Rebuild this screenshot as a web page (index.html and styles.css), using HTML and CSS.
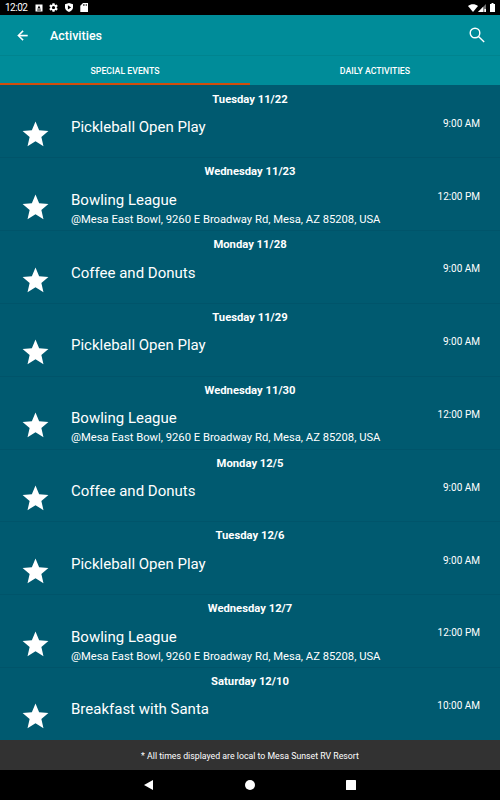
FILE: index.html
```html
<!DOCTYPE html>
<html lang="en">
<head>
  <meta charset="UTF-8">
  <meta name="viewport" content="width=device-width, initial-scale=1.0">
  <title>Activities</title>
  <link rel="stylesheet" href="styles.css">
</head>
<body>
<svg class="defs">
  <symbol id="star" viewBox="0 0 24 24">
    <path d="M12 17.27L18.18 21l-1.64-7.03L22 9.24l-7.19-.61L12 2 9.19 8.63 2 9.24l5.46 4.73L5.82 21z"/>
  </symbol>
</svg>

<!-- Status bar -->
<div class="status-bar">
  <span class="clock">12:02</span>
  <svg class="status-icon" viewBox="0 0 8 8"><path fill-rule="evenodd" d="M.5.5h7v7h-7zM4 1.500L2.400 4.600h3.200zM2.200 5.500v.9h3.600v-.9z"/></svg>
  <svg class="status-icon gear" viewBox="2 2 20 20"><path d="M19.14 12.94c.04-.3.06-.61.06-.94 0-.32-.02-.64-.07-.94l2.03-1.58c.18-.14.23-.41.12-.61l-1.92-3.32c-.12-.22-.37-.29-.59-.22l-2.39.96c-.5-.38-1.03-.7-1.62-.94l-.36-2.54c-.04-.24-.24-.41-.48-.41h-3.84c-.24 0-.43.17-.47.41l-.36 2.54c-.59.24-1.13.57-1.62.94l-2.39-.96c-.22-.08-.47 0-.59.22L2.74 8.87c-.12.21-.08.47.12.61l2.03 1.58c-.05.3-.09.63-.09.94s.02.64.07.94l-2.03 1.58c-.18.14-.23.41-.12.61l1.92 3.32c.12.22.37.29.59.22l2.39-.96c.5.38 1.03.7 1.62.94l.36 2.54c.05.24.24.41.48.41h3.84c.24 0 .44-.17.47-.41l.36-2.54c.59-.24 1.13-.56 1.62-.94l2.39.96c.22.08.47 0 .59-.22l1.92-3.32c.12-.22.07-.47-.12-.61l-2.01-1.58zM12 15.6c-1.98 0-3.6-1.62-3.6-3.6s1.62-3.6 3.6-3.6 3.6 1.62 3.6 3.6-1.62 3.6-3.6 3.6z"/></svg>
  <svg class="status-icon shield" viewBox="0 0 8 9"><path fill-rule="evenodd" d="M4 0l4 1.200v3.300C8 6.700 6 8.300 4 9 2 8.300 0 6.700 0 4.500V1.200zM2.900 2.300v4.200L6.100 4.400z"/></svg>
  <svg class="status-icon sd" viewBox="0 0 8 9"><path fill-rule="evenodd" d="M3 0h5v9H.3V2.700zM3 1.200v1.600h.8V1.200zm1.500 0v1.600h.8V1.200zm1.500 0v1.600h.8V1.200z"/></svg>
  <div class="status-right">
    <svg width="10" height="8" viewBox="0 0 10 8"><path d="M0 2C2.800-.4 7.200-.4 10 2L5 8z"/></svg>
    <svg width="8" height="8" viewBox="0 0 8 8"><path opacity=".45" d="M8 0v8H0z"/><path d="M5.200 2.800V8H0z"/><path d="M6.400 5h1.600v3H6.400z"/></svg>
    <svg class="battery" width="5" height="9" viewBox="0 0 5 9"><path d="M1.500 0h2v.9H5V9H0V.9h1.500z"/></svg>
  </div>
</div>

<div class="app-bar">
  <svg class="back" viewBox="0 0 24 24"><path d="M20 11H7.830l5.590-5.590L12 4l-8 8 8 8 1.410-1.410L7.830 13H20v-2z"/></svg>
  <h1>Activities</h1>
  <svg class="search" viewBox="0 0 16 16"><circle cx="6" cy="6" r="4.800"/><path d="M9.500 9.500l5.700 5.500"/></svg>
</div>

<div class="tabs">
  <div class="tab active">SPECIAL EVENTS</div>
  <div class="tab">DAILY ACTIVITIES</div>
</div>

<div class="events">
  <div class="event">
    <div class="date">Tuesday 11/22</div>
    <svg class="star"><use href="#star"/></svg>
    <div class="info"><div class="name">Pickleball Open Play</div></div>
    <div class="time">9:00 AM</div>
  </div>
  <div class="event">
    <div class="date">Wednesday 11/23</div>
    <svg class="star"><use href="#star"/></svg>
    <div class="info">
      <div class="name">Bowling League</div>
      <div class="place">@Mesa East Bowl, 9260 E Broadway Rd, Mesa, AZ 85208, USA</div>
    </div>
    <div class="time">12:00 PM</div>
  </div>
  <div class="event">
    <div class="date">Monday 11/28</div>
    <svg class="star"><use href="#star"/></svg>
    <div class="info"><div class="name">Coffee and Donuts</div></div>
    <div class="time">9:00 AM</div>
  </div>
  <div class="event">
    <div class="date">Tuesday 11/29</div>
    <svg class="star"><use href="#star"/></svg>
    <div class="info"><div class="name">Pickleball Open Play</div></div>
    <div class="time">9:00 AM</div>
  </div>
  <div class="event">
    <div class="date">Wednesday 11/30</div>
    <svg class="star"><use href="#star"/></svg>
    <div class="info">
      <div class="name">Bowling League</div>
      <div class="place">@Mesa East Bowl, 9260 E Broadway Rd, Mesa, AZ 85208, USA</div>
    </div>
    <div class="time">12:00 PM</div>
  </div>
  <div class="event">
    <div class="date">Monday 12/5</div>
    <svg class="star"><use href="#star"/></svg>
    <div class="info"><div class="name">Coffee and Donuts</div></div>
    <div class="time">9:00 AM</div>
  </div>
  <div class="event">
    <div class="date">Tuesday 12/6</div>
    <svg class="star"><use href="#star"/></svg>
    <div class="info"><div class="name">Pickleball Open Play</div></div>
    <div class="time">9:00 AM</div>
  </div>
  <div class="event">
    <div class="date">Wednesday 12/7</div>
    <svg class="star"><use href="#star"/></svg>
    <div class="info">
      <div class="name">Bowling League</div>
      <div class="place">@Mesa East Bowl, 9260 E Broadway Rd, Mesa, AZ 85208, USA</div>
    </div>
    <div class="time">12:00 PM</div>
  </div>
  <div class="event">
    <div class="date">Saturday 12/10</div>
    <svg class="star"><use href="#star"/></svg>
    <div class="info"><div class="name">Breakfast with Santa</div></div>
    <div class="time">10:00 AM</div>
  </div>
</div>

<div class="note">* All times displayed are local to Mesa Sunset RV Resort</div>

<!-- Android navigation -->
<div class="nav-bar">
  <svg viewBox="0 0 10 10"><path d="M9 0v10L0 5z"/></svg>
  <svg viewBox="0 0 10 10"><circle cx="5" cy="5" r="5"/></svg>
  <svg viewBox="0 0 10 10"><rect width="10" height="10" rx=".6"/></svg>
</div>
</body>
</html>
```
FILE: styles.css
```css
* {
  box-sizing: border-box;
}

body {
  margin: 0;
  height: 800px;
  display: flex;
  flex-direction: column;
  overflow: hidden;
  font-family: Roboto, sans-serif;
  color: white;
  background: #005a70;
}

svg {
  display: block;
  fill: white;
  flex: none;
}

.defs {
  display: none;
}

/* Status bar */
.status-bar {
  height: 15px;
  flex: none;
  display: flex;
  align-items: center;
  padding: 0 5px;
  background: #000;
}

.clock {
  width: 30px;
  font-size: 10px;
  line-height: 17px;
  letter-spacing: -0.5px;
}

.status-icon {
  width: 8px;
  height: 8px;
  margin-right: 6px;
}

.gear {
  width: 9px;
  height: 9px;
  margin-right: 7px;
}

.shield,
.sd {
  height: 9px;
  margin-right: 7px;
}

.status-right {
  display: flex;
  align-items: center;
  margin-left: auto;
}

.battery {
  margin-left: 4px;
}

/* App bar */
.app-bar {
  height: 40px;
  flex: none;
  display: flex;
  align-items: center;
  padding: 0 15px;
  background: #008c99;
}

.back {
  width: 15px;
  height: 15px;
  stroke: white;
  stroke-width: 0.6;
}

.app-bar h1 {
  margin: 0 auto 0 20px;
  font-size: 12.5px;
  font-weight: 500;
  line-height: 40px;
  padding-top: 2px;
}

.search {
  width: 16px;
  height: 16px;
  fill: none;
  stroke: white;
  stroke-width: 1.4;
}

.tabs {
  height: 30px;
  flex: none;
  display: flex;
  background: #008c99;
  border-top: 1px solid #00848f;
}

.tab {
  flex: 1;
  text-align: center;
  font-size: 8.75px;
  font-weight: 500;
  line-height: 30px;
}

.tab.active {
  border-bottom: 2px solid #d14d0b;
}

/* Events */
.events {
  flex: 1;
  padding-top: 0.6px;
  overflow: hidden;
}

.event {
  height: 72.8px;
  display: grid;
  grid-template-columns: 51px 1fr auto;
  grid-template-rows: 28px 1fr;
  padding: 0 20px;
  border-bottom: 1px solid #00546a;
}

.event:last-child {
  border-bottom: none;
}

.date {
  grid-column: 1 / 4;
  text-align: center;
  font-size: 11.25px;
  font-weight: 700;
  line-height: 27.6px;
}

.star {
  width: 31px;
  height: 31px;
  margin-top: 5.4px;
}

.name {
  margin-top: 3.4px;
  font-size: 15px;
  line-height: 20px;
}

.place {
  margin-top: 2px;
  font-size: 11.23px;
  line-height: 16px;
  white-space: nowrap;
}

.time {
  margin-top: 4.2px;
  font-size: 10px;
  line-height: 12px;
}

.note {
  height: 30px;
  flex: none;
  text-align: center;
  font-size: 8.75px;
  line-height: 32px;
  background: #323232;
}

.nav-bar {
  height: 30px;
  flex: none;
  display: flex;
  justify-content: center;
  align-items: center;
  gap: 91px;
  background: #000;
}

.nav-bar svg {
  width: 10px;
  height: 10px;
}
```
